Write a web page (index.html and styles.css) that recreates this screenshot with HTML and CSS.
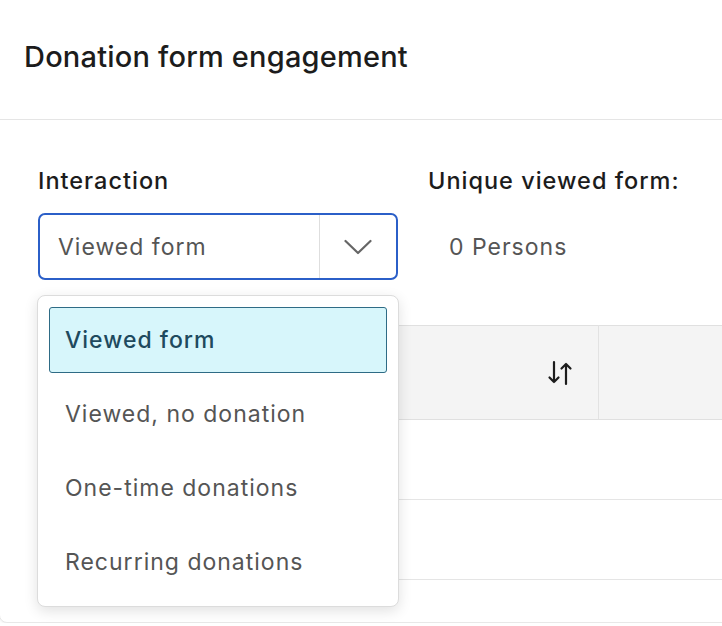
FILE: index.html
```html
<!DOCTYPE html>
<html lang="en">
<head>
  <meta charset="UTF-8">
  <title>Donation form engagement</title>
  <link rel="stylesheet" href="styles.css">
</head>
<body>
  <div class="card">
    <div class="card-header">
      <h2 class="card-title">Donation form engagement</h2>
    </div>

    <div class="card-body">
      <div class="filters">
        <div class="field field-select">
          <label class="field-label">Interaction</label>
          <div class="select is-open">
            <span class="select-value">Viewed form</span>
            <span class="select-toggle">
              <svg width="28" height="16" viewBox="0 0 28 16">
                <path d="M1.5 2 L14 14 L26.5 2" fill="none" stroke="#666" stroke-width="2.2" stroke-linecap="round" stroke-linejoin="round"/>
              </svg>
            </span>
          </div>

          <ul class="select-menu">
            <li class="select-option selected">Viewed form</li>
            <li class="select-option">Viewed, no donation</li>
            <li class="select-option">One-time donations</li>
            <li class="select-option">Recurring donations</li>
          </ul>
        </div>

        <div class="field">
          <label class="field-label">Unique viewed form:</label>
          <div class="stat-value">0 Persons</div>
        </div>
      </div>

      <table class="data-table">
        <thead>
          <tr>
            <th class="col-name">
              <span class="sort-icon">
                <svg width="26" height="26" viewBox="0 0 26 26">
                  <!-- down arrow -->
                  <path d="M7 2 V22 M2.5 17.5 L7 22 L11.5 17.5" fill="none" stroke="#1c1c1c" stroke-width="2.2" stroke-linecap="round" stroke-linejoin="round"/>
                  <!-- up arrow -->
                  <path d="M19 24 V4 M14.5 8.5 L19 4 L23.5 8.5" fill="none" stroke="#1c1c1c" stroke-width="2.2" stroke-linecap="round" stroke-linejoin="round"/>
                </svg>
              </span>
            </th>
            <th class="col-rest"></th>
          </tr>
        </thead>
        <tbody>
          <tr><td></td><td></td></tr>
          <tr><td></td><td></td></tr>
        </tbody>
      </table>
    </div>
  </div>
</body>
</html>
```

FILE: styles.css
```css
html, body {
  margin: 0;
  padding: 0;
  background: #fff;
  font-family: 'Inter', 'Noto Sans', sans-serif;
  color: #1c1c1c;
  overflow: hidden;
}

.card {
  width: 780px;
  margin: -10px 0 0 -1px;
  border: 1px solid #e8e8e8;
  border-radius: 8px;
  box-shadow: 0 1px 3px rgba(0, 0, 0, 0.06);
  background: #fff;
}

.card-header {
  height: 129px;
  padding: 10px 0 8px 24px;
  box-sizing: border-box;
  border-bottom: 1px solid #e5e5e5;
  display: flex;
  align-items: center;
}

.card-title {
  margin: 0;
  font-size: 29px;
  font-weight: 500;
  letter-spacing: 0.2px;
}

.card-body {
  padding: 48px 0 42px 38px;
}

.filters {
  display: flex;
  gap: 30px;
}

.field {
  display: flex;
  flex-direction: column;
  gap: 19px;
}

.field-select {
  position: relative;
  width: 360px;
}

.field-label {
  font-size: 23.5px;
  font-weight: 500;
  line-height: 26px;
  letter-spacing: 1px;
}

.select {
  height: 67px;
  box-sizing: border-box;
  border: 2px solid #2b5fc8;
  border-radius: 7px;
  display: flex;
  align-items: stretch;
}

.select-value {
  flex: 1;
  display: flex;
  align-items: center;
  padding-left: 18px;
  font-size: 23px;
  letter-spacing: 1px;
  color: #555;
}

.select-toggle {
  width: 76px;
  border-left: 1px solid #dedede;
  display: flex;
  align-items: center;
  justify-content: center;
}

.select-toggle svg {
  display: block;
}

.stat-value {
  height: 67px;
  display: flex;
  align-items: center;
  padding-left: 21px;
  font-size: 23px;
  letter-spacing: 1px;
  color: #555;
}

.select-menu {
  position: absolute;
  top: 127px;
  left: -1px;
  width: 362px;
  box-sizing: border-box;
  margin: 0;
  padding: 11px;
  list-style: none;
  background: #fff;
  border: 1px solid #dcdcdc;
  border-radius: 8px;
  box-shadow: 0 4px 14px rgba(0, 0, 0, 0.12);
  display: flex;
  flex-direction: column;
  gap: 8px;
  z-index: 5;
}

.select-option {
  height: 66px;
  box-sizing: border-box;
  padding-left: 15px;
  display: flex;
  align-items: center;
  font-size: 23px;
  letter-spacing: 1px;
  color: #555;
  border: 1px solid transparent;
  border-radius: 3px;
}

.select-option.selected {
  background: #d7f6fb;
  border-color: #2e6b85;
  color: #1e4a5e;
  font-weight: 500;
}

.data-table {
  width: 740px;
  margin-top: 45px;
  border-collapse: collapse;
}

.data-table th {
  height: 93px;
  background: #f4f4f4;
  border-top: 1px solid #e0e0e0;
  border-bottom: 1px solid #e0e0e0;
  padding: 0;
}

.data-table .col-name {
  width: 560px;
  border-right: 1px solid #e2e2e2;
  text-align: right;
}

.sort-icon {
  display: inline-block;
  margin-right: 25px;
  vertical-align: middle;
}

.sort-icon svg {
  display: block;
}

.data-table td {
  height: 79px;
  border-bottom: 1px solid #e5e5e5;
  padding: 0;
}
```
